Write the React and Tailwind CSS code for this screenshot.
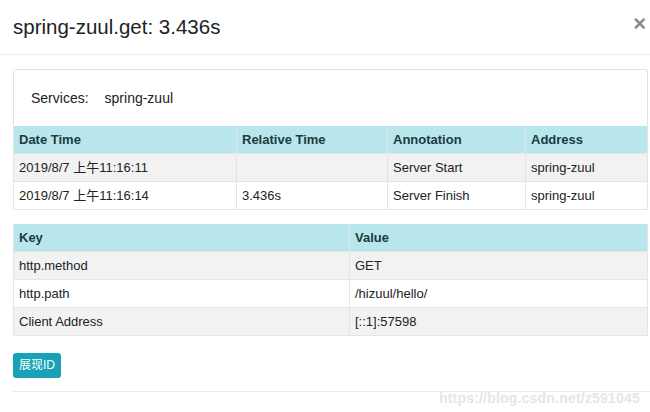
const spans = [
  { date: "2019/8/7 上午11:16:11", rel: "", ann: "Server Start", addr: "spring-zuul" },
  { date: "2019/8/7 上午11:16:14", rel: "3.436s", ann: "Server Finish", addr: "spring-zuul" },
];

const tags = [
  { key: "http.method", value: "GET" },
  { key: "http.path", value: "/hizuul/hello/" },
  { key: "Client Address", value: "[::1]:57598" },
];

const cell = "h-[27px] flex items-center px-[5px] border-r border-[#e2e4e6] last:border-r-0";

export default function App() {
  return (
    <div
      className="relative w-[650px] h-[412px] bg-white overflow-hidden text-[#222]"
      style={{ fontFamily: '"Liberation Sans", "Noto Sans CJK SC", sans-serif' }}
    >
      <div className="h-[55px] border-b border-[#e9ecef] flex items-center justify-between pl-[13px] pr-[4px]">
        <h1 className="text-[20.5px] text-[#222] pt-[1px]">spring-zuul.get: 3.436s</h1>
        <span className="text-[22px] font-bold text-[#8a8a8a] leading-none -mt-[6px]">×</span>
      </div>

      <div className="pl-[13px] pr-[2px] pt-[14px]">
        <div className="border border-b-0 border-[#dfe1e3] rounded-t-[3px] h-[57px] flex items-center pl-[17px] text-[14px] pt-[1px]">
          <span>Services:</span>
          <span className="ml-[16px]">spring-zuul</span>
        </div>

        <div className="border border-t-0 border-[#e2e4e6] text-[13px]">
          <div className="grid grid-cols-[223px_151px_138px_1fr] bg-[#b9e6ec] font-bold text-[#183c42]">
            <div className={cell + " border-[#a9dbe2]"}>Date Time</div>
            <div className={cell + " border-[#a9dbe2]"}>Relative Time</div>
            <div className={cell + " border-[#a9dbe2]"}>Annotation</div>
            <div className={cell}>Address</div>
          </div>
          {spans.map((s, i) => (
            <div
              key={i}
              className={
                "grid grid-cols-[223px_151px_138px_1fr] border-t border-[#e2e4e6] " +
                (i % 2 === 0 ? "bg-[#f2f2f2]" : "bg-white")
              }
            >
              <div className={cell}>{s.date}</div>
              <div className={cell}>{s.rel}</div>
              <div className={cell}>{s.ann}</div>
              <div className={cell}>{s.addr}</div>
            </div>
          ))}
        </div>

        <div className="mt-[14px] border border-t-0 border-[#e2e4e6] text-[13px]">
          <div className="grid grid-cols-[336px_1fr] bg-[#b9e6ec] font-bold text-[#183c42]">
            <div className={cell + " border-[#a9dbe2]"}>Key</div>
            <div className={cell}>Value</div>
          </div>
          {tags.map((t, i) => (
            <div
              key={t.key}
              className={
                "grid grid-cols-[336px_1fr] border-t border-[#e2e4e6] " +
                (i % 2 === 0 ? "bg-[#f2f2f2]" : "bg-white")
              }
            >
              <div className={cell}>{t.key}</div>
              <div className={cell}>{t.value}</div>
            </div>
          ))}
        </div>

        <div className="pt-[16px] pb-[13px] border-b border-[#e9ecef] -mr-[2px]">
          <button className="h-[25px] px-[6px] rounded-[3px] bg-[#17a2b8] text-white text-[12px]">
            展现ID
          </button>
        </div>
      </div>

      <div className="absolute right-[10px] top-[388px] text-[14px] font-bold text-[#e6e6e6] tracking-[0.2px]">
        https://blog.csdn.net/z591045
      </div>
    </div>
  );
}
